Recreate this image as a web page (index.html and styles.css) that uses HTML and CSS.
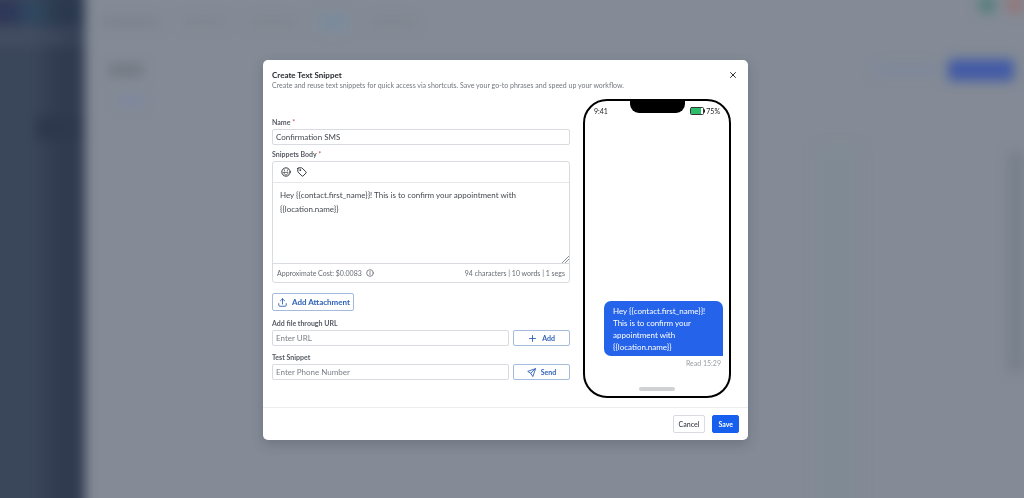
FILE: index.html
```html
<!DOCTYPE html>
<html lang="en">
<head>
  <meta charset="UTF-8">
  <meta name="viewport" content="width=device-width, initial-scale=1.0">
  <title>Create Text Snippet</title>
  <link rel="stylesheet" href="styles.css">
</head>
<body>
  <!-- Blurred app behind the dialog -->
  <div class="backdrop" aria-hidden="true">
    <div class="side">
      <div class="side-logo"></div>
      <div class="side-search"></div>
      <div class="side-menu"></div>
    </div>
    <div class="page">
      <div class="page-nav">
        <span class="blob wide"></span>
        <span class="blob"></span>
        <span class="blob"></span>
        <span class="blob active"></span>
        <span class="blob"></span>
        <span class="dot green"></span>
        <span class="dot red"></span>
      </div>
      <div class="page-head">
        <span class="page-title"></span>
        <span class="page-btn ghost"></span>
        <span class="page-btn"></span>
      </div>
      <div class="page-tab"></div>
      <div class="page-table">
        <span class="col"></span>
        <span class="scroll"></span>
      </div>
    </div>
  </div>

  <!-- Dialog -->
  <div class="overlay">
    <form class="modal" role="dialog" aria-labelledby="modalTitle">
      <header class="modal-header">
        <div>
          <h1 id="modalTitle">Create Text Snippet</h1>
          <p>Create and reuse text snippets for quick access via shortcuts. Save your go-to phrases and speed up your workflow.</p>
        </div>
        <button type="button" class="close" aria-label="Close">
          <svg viewBox="0 0 8 8"><path d="M1.500 1.500l5 5M6.500 1.500l-5 5"/></svg>
        </button>
      </header>

      <div class="modal-body">
        <div class="fields">
          <div class="field">
            <label for="name">Name <span class="req">*</span></label>
            <input type="text" id="name" value="Confirmation SMS">
          </div>

          <div class="field">
            <label for="body">Snippets Body <span class="req">*</span></label>
            <div class="editor">
              <div class="toolbar">
                <button type="button" aria-label="Emoji">
                  <svg viewBox="0 0 24 24"><circle cx="12" cy="12" r="10"/><path stroke-width="1.600" d="M7 13h10c0 3.500-2 5.500-5 5.500S7 16.500 7 13zM8.500 7v2.500M15.500 7v2.500"/></svg>
                </button>
                <button type="button" aria-label="Custom values">
                  <svg viewBox="0 0 24 24"><path d="M2 3.500v7.500c0 .6.200 1 .6 1.400l9 9c.9.900 2.200.900 3.100 0l6.700-6.700c.9-.9.900-2.200 0-3.100l-9-9C12 2.200 11.500 2 11 2H3.500C2.700 2 2 2.700 2 3.500z"/><circle cx="7.500" cy="7.500" r="1"/></svg>
                </button>
              </div>
              <textarea id="body">Hey {{contact.first_name}}! This is to confirm your appointment with {{location.name}}</textarea>
              <div class="counts">
                <span class="cost">Approximate Cost: $0.0083
                  <svg viewBox="0 0 24 24"><circle cx="12" cy="12" r="10"/><path d="M12 11v6M12 7v1"/></svg>
                </span>
                <span>94 characters | 10 words | 1 segs</span>
              </div>
            </div>
          </div>

          <button type="button" class="btn outline attach">
            <svg viewBox="0 0 24 24"><path d="M12 16V2M6.500 7.500L12 2l5.500 5.500M2 15v4c0 1.700 1.300 3 3 3h14c1.700 0 3-1.300 3-3v-4"/></svg>
            Add Attachment
          </button>

          <div class="field">
            <label for="url">Add file through URL</label>
            <div class="row">
              <input type="text" id="url" placeholder="Enter URL">
              <button type="button" class="btn outline">
                <svg viewBox="0 0 24 24"><path d="M12 4v16M4 12h16"/></svg>
                Add
              </button>
            </div>
          </div>

          <div class="field">
            <label for="phone">Test Snippet</label>
            <div class="row">
              <input type="text" id="phone" placeholder="Enter Phone Number">
              <button type="button" class="btn outline">
                <svg viewBox="0 0 24 24"><path d="M22 2L2 9l8 5 5 8zM22 2L10 14"/></svg>
                Send
              </button>
            </div>
          </div>
        </div>

        <!-- Phone preview -->
        <div class="phone">
          <div class="notch"></div>
          <div class="phone-status">
            <span>9:41</span>
            <span class="battery">
              <svg viewBox="0 0 15 8"><rect x=".5" y=".5" width="13" height="7" rx="1" fill="#fff" stroke="#333" stroke-width="1"/><rect x="1" y="1" width="10" height="6" fill="#2dbd6a"/><path d="M14 2.500h1v3h-1z" fill="#222"/></svg>
              75%
            </span>
          </div>
          <div class="chat">
            <div class="bubble">Hey {{contact.first_name}}! This is to confirm your appointment with {{location.name}}</div>
            <div class="read">Read 15:29</div>
          </div>
          <div class="home-bar"></div>
        </div>
      </div>

      <footer class="modal-footer">
        <button type="button" class="btn cancel">Cancel</button>
        <button type="submit" class="btn save">Save</button>
      </footer>
    </form>
  </div>
</body>
</html>
```
FILE: styles.css
```css
:root {
  --blue: #175fee;
  --border: #d8dbdf;
  --text: #45494f;
}
* { box-sizing: border-box; }
html, body { margin: 0; height: 100%; }
body {
  background: #848b96;
  font-family: Lato, "Noto Sans", sans-serif;
  font-size: 7px;
  line-height: 10px;
  color: var(--text);
  overflow: hidden;
}
button, input, textarea { font: inherit; color: inherit; margin: 0; }
svg { fill: none; stroke: currentColor; stroke-width: 2.4; stroke-linecap: round; stroke-linejoin: round; flex: none; }

/* Blurred app */
.backdrop {
  position: fixed;
  inset: -20px;
  display: flex;
  filter: blur(6px);
}
.side {
  width: 105px;
  padding-top: 20px;
  background: linear-gradient(90deg, #3a465a 50%, #303b4f 75%);
}
.side-logo { height: 24px; background: linear-gradient(90deg, #2f3858 30%, #304a62 50%, #2b394e 75%); }
.side-search { height: 18px; margin-top: 4px; background: linear-gradient(90deg, #434d61 50%, #364156 90%); }
.side-menu { height: 24px; margin: 70px 0 0 56px; background: #2e384d; }
.page { flex: 1; display: flex; flex-direction: column; padding: 20px 20px 0 16px; }
.page-nav { height: 44px; display: flex; align-items: center; gap: 24px; }
.blob { width: 44px; height: 8px; background: #7e858f; }
.blob.wide { width: 58px; background: #7a818b; }
.blob.active { width: 28px; height: 18px; background: #7a8b9b; }
.dot { width: 18px; height: 18px; border-radius: 50%; align-self: flex-start; margin-top: -4px; }
.dot.green { margin-left: auto; background: #557d7c; }
.dot.red { margin-left: -14px; background: #937679; }
.page-head { height: 52px; display: flex; align-items: center; gap: 8px; padding-right: 10px; }
.page-title { width: 34px; height: 12px; margin: 0 auto 0 8px; background: #737882; }
.page-btn { width: 66px; height: 22px; border-radius: 4px; background: #435ba5; }
.page-btn.ghost { background: #7e879c; height: 10px; }
.page-tab { width: 24px; height: 10px; margin-left: 18px; background: #7d86a0; }
.page-table { flex: 1; display: flex; margin-top: 40px; }
.col { width: 44px; margin: 0 0 0 auto; background: #808a94; }
.scroll { width: 16px; height: 220px; margin: 6px 0 0 148px; background: #777f8a; }

/* Dialog */
.overlay {
  position: fixed;
  inset: 0;
  display: flex;
  align-items: center;
  justify-content: center;
  padding: 2px 13px 0 0;
}
.modal {
  width: 485px;
  max-width: 96%;
  background: #fff;
  border-radius: 5px;
  box-shadow: 0 4px 12px rgba(40,50,65,0.25);
}
.modal-header {
  display: flex;
  justify-content: space-between;
  align-items: flex-start;
  padding: 10px 10px 0 9px;
}
.modal-header h1 { margin: 0; font-size: 8px; line-height: 10px; font-weight: 700; color: #26292e; }
.modal-header p { margin: 0; color: #74787f; }
.close { width: 10px; height: 10px; padding: 1px; border: 0; background: none; cursor: pointer; color: #333; }
.close svg { display: block; width: 8px; height: 8px; stroke-width: 1; }

.modal-body {
  display: grid;
  grid-template-columns: 1fr 148px;
  gap: 13px;
  padding: 9px 17px 9px 9px;
}
.fields { padding-top: 18px; }
.field { margin-bottom: 4px; }
label { display: block; height: 12px; font-weight: 700; color: #565b63; }
.req { font-weight: 400; color: #cf4c57; }
input {
  display: block;
  width: 100%;
  height: 16px;
  padding: 0 3px;
  border: 1px solid var(--border);
  border-radius: 2px;
  background: #fff;
  font-size: 8px;
}
::placeholder { color: #7c8188; opacity: 1; }
.row { display: grid; grid-template-columns: 1fr 57px; gap: 4px; }

.editor { border: 1px solid var(--border); border-radius: 3px; }
.toolbar { height: 21px; display: flex; align-items: center; gap: 6px; padding: 0 8px; border-bottom: 1px solid #e5e7ea; }
.toolbar button { padding: 0; border: 0; background: none; color: #33363b; cursor: pointer; }
.toolbar svg { display: block; width: 10px; height: 10px; }
textarea {
  display: block;
  width: 100%;
  height: 80px;
  padding: 5px 7px;
  border: 0;
  outline: 0;
  background: none;
  font-size: 8px;
  line-height: 14px;
  resize: vertical;
}
textarea::-webkit-resizer {
  background: linear-gradient(135deg, transparent 74%, #8a8f96 74%, #8a8f96 78%, transparent 78%, transparent 86%, #8a8f96 86%, #8a8f96 90%, transparent 90%);
}
.counts {
  height: 19px;
  display: flex;
  justify-content: space-between;
  align-items: center;
  padding: 0 4px;
  border-top: 1px solid var(--border);
  color: #666b73;
}
.cost { display: flex; align-items: center; gap: 4px; }
.cost svg { width: 8px; height: 8px; }

.btn {
  display: flex;
  align-items: center;
  justify-content: center;
  gap: 5px;
  height: 18px;
  padding: 0 5px;
  border: 1px solid var(--border);
  border-radius: 2px;
  background: #fff;
  font-weight: 700;
  cursor: pointer;
}
.btn svg { width: 9px; height: 9px; }
.outline { border-color: #a5bbdc; color: #2f62b8; }
.row .btn { height: 16px; }
.attach { margin: 10px 0 7px; font-size: 8px; padding: 0 3px 0 5px; }
.attach ~ .field { margin-bottom: 6px; }

/* Phone */
.phone {
  display: flex;
  flex-direction: column;
  min-height: 299px;
  border: 2px solid #000;
  border-radius: 24px;
  overflow: hidden;
}
.notch { width: 55px; height: 12px; margin: 0 auto -12px; background: #000; border-radius: 0 0 9px 9px; }
.phone-status { display: flex; justify-content: space-between; padding: 5px 9px; color: #222; }
.battery { display: flex; align-items: center; gap: 1px; }
.battery svg { width: 15px; height: 8px; stroke: none; }
.chat { margin-top: auto; padding: 0 6px 0 19px; }
.bubble {
  padding: 4px 9px 3px;
  border-radius: 7px 7px 0 7px;
  background: #2563eb;
  color: #fff;
  font-size: 8px;
  line-height: 12px;
}
.read { padding: 2px 2px 0; text-align: right; color: #999da3; }
.home-bar { width: 36px; height: 4px; margin: 19px auto 5px; border-radius: 2px; background: #cfd1d3; }

.modal-footer {
  display: flex;
  justify-content: flex-end;
  gap: 7px;
  padding: 7px 9px;
  border-top: 1px solid #eceef0;
}
.cancel { font-weight: 600; }
.save { background: var(--blue); border-color: var(--blue); color: #fff; }
```
